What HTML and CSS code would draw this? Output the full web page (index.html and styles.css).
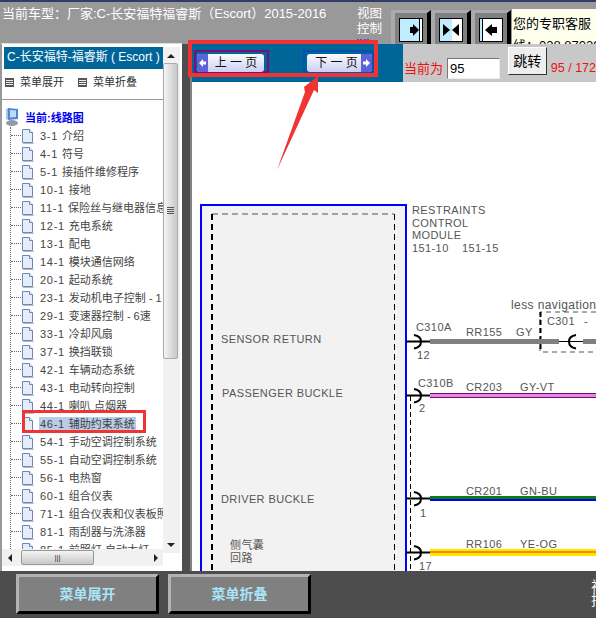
FILE: index.html
```html
<!DOCTYPE html>
<html lang="zh-CN">
<head>
  <meta charset="UTF-8" />
  <title>线路图</title>
  <link rel="stylesheet" href="styles.css">
</head>
<body>
<div class="page">

  <!-- TOP BAR -->
  <div class="top">
    <div class="model">当前车型：厂家:C-长安福特福睿斯（Escort）2015-2016</div>
    <div class="view-label">视图<br>控制<i class="view-dots"></i></div>
    <div class="view-btns">
      <div class="view-btn">
        <svg width="24" height="24" viewBox="0 0 24 24"><rect x=".5" y=".5" width="23" height="23" fill="#c0ecff" stroke="#000"/><rect x="20" y="1" width="3" height="22" fill="#fff"/><rect x="20" y="1" width="1" height="22"/><rect x="11" y="9" width="3" height="6"/><path d="M14 6l6 6-6 6z"/></svg>
      </div>
      <div class="view-btn">
        <svg width="24" height="24" viewBox="0 0 24 24"><rect x="1" y="1" width="12" height="22" fill="#c0ecff"/><rect x="13" y="1" width="10" height="22" fill="#fff"/><rect x=".5" y=".5" width="23" height="23" fill="none" stroke="#000"/><path d="M4 6l7 6-7 6zM20 6l-7 6 7 6z"/></svg>
      </div>
      <div class="view-btn">
        <svg width="24" height="24" viewBox="0 0 24 24"><rect x=".5" y=".5" width="23" height="23" fill="#fff" stroke="#000"/><rect x="1" y="1" width="3" height="22" fill="#c0ecff"/><rect x="3" y="1" width="1" height="22"/><path d="M6 12l7-6v3h5v6h-5v3z"/></svg>
      </div>
    </div>
    <div class="service">您的专职客服<br>线：028 87039</div>
  </div>

  <div class="main">

    <!-- LEFT MENU -->
    <div class="side">
      <div class="side-inner">
        <div class="side-left">
          <div class="side-title">C-长安福特-福睿斯 ( Escort ) -</div>
          <div class="side-tools">
            <span class="tool"><i class="tool-ico"></i>菜单展开</span>
            <span class="tool"><i class="tool-ico"></i>菜单折叠</span>
          </div>
          <div class="tree-wrap">
            <div class="tree-root">
              <svg width="14" height="20" viewBox="0 0 14 20"><path d="M3 1l10 1v10l-10 1z" fill="#4f86d0"/><path d="M5 3l6 .5v6.500l-6 .5z" fill="#bcdcff"/><path d="M1 2l2-1v12l-2-1z" fill="#a8c4e8"/><ellipse cx="7" cy="16" rx="6" ry="3" fill="#8f99a6"/></svg>
              <b>当前:线路图</b>
            </div>
            <ul class="tree" id="tree"></ul>
          </div>
          <div class="hscroll">
            <span class="arrow-l"></span>
            <span class="hthumb">|||</span>
            <span class="arrow-r"></span>
          </div>
        </div>
        <div class="vscroll">
          <span class="arrow-u"></span>
          <span class="vthumb"><i></i></span>
          <span class="arrow-d"></span>
        </div>
      </div>
    </div>

    <!-- DIAGRAM -->
    <div class="content">
      <div class="band">
        <div class="pager">
          <div class="page-frame prev">
            <div class="page-btn"><svg class="ico" width="11" height="18" viewBox="0 0 11 18"><path d="M2 9l4-4v2.500h3v3H6V13z" fill="#fff"/></svg>上 一 页</div>
          </div>
          <div class="page-frame next">
            <div class="page-btn">下 一 页<svg class="ico" width="11" height="18" viewBox="0 0 11 18"><path d="M9 9L5 5v2.500H2v3h3V13z" fill="#fff"/></svg></div>
          </div>
        </div>
        <div class="jump">
          <span class="now">当前为</span>
          <span class="num-input">95</span>
          <span class="go">跳转</span>
          <span class="count">95 / 172</span>
        </div>
      </div>
      <div class="sheet">
        <svg class="diagram" width="406" height="381" viewBox="0 0 406 381">
          <rect x="11" y="15" width="205" height="480" fill="#f2f2f2" stroke="#0000ff" stroke-width="2"/>
          <path d="M22 24h182" fill="none" stroke="#555" stroke-dasharray="6 4"/>
          <path d="M22 24v460" stroke="#000" stroke-width="2" stroke-dasharray="6 4"/>
          <path d="M204.500 24v460" stroke="#000" stroke-dasharray="6 4"/>
          <g class="lbl">
            <text x="222" y="24">RESTRAINTS</text>
            <text x="222" y="37">CONTROL</text>
            <text x="222" y="49">MODULE</text>
            <text x="222" y="62">151-10</text>
            <text x="272" y="62">151-15</text>
            <text class="lbl-big" x="321" y="119">less navigation</text>
            <text x="31" y="153">SENSOR RETURN</text>
            <text x="32" y="207">PASSENGER BUCKLE</text>
            <text x="31" y="313">DRIVER BUCKLE</text>
            <text x="40" y="359">侧气囊</text>
            <text x="40" y="372">回路</text>
            <text x="226" y="141">C310A</text>
            <text x="227" y="169">12</text>
            <text x="276" y="146">RR155</text>
            <text x="326" y="146">GY</text>
            <text x="357" y="135">C301</text>
            <text x="394" y="135">-</text>
            <text x="228" y="197">C310B</text>
            <text x="276" y="201">CR203</text>
            <text x="330" y="201">GY-VT</text>
            <text x="229" y="222">2</text>
            <text x="276" y="305">CR201</text>
            <text x="330" y="305">GN-BU</text>
            <text x="230" y="327">1</text>
            <text x="276" y="358">RR106</text>
            <text x="330" y="358">YE-OG</text>
            <text x="229" y="380">17</text>
          </g>
          <path d="M406 122h-56v40h56" fill="none" stroke="#555" stroke-dasharray="5 4"/>
          <path d="M350.500 122v40" stroke="#000" stroke-width="2" stroke-dasharray="5 3"/>
          <path d="M220.500 206v175" stroke="#000" stroke-dasharray="5 3"/>
          <g class="wires">
            <rect x="240" y="149" width="129" height="5" fill="#808080"/>
            <rect x="393" y="149" width="13" height="5" fill="#808080"/>
            <path d="M369 151.500h24"/>
            <rect x="240" y="203" width="166" height="5" fill="#800080"/>
            <rect x="240" y="204" width="166" height="3" fill="#d98fd9"/>
            <rect x="240" y="306" width="166" height="3" fill="#0a7d0a"/>
            <rect x="240" y="309" width="166" height="2" fill="#0000ff"/>
            <rect x="240" y="359" width="166" height="7" fill="#ffe600"/>
            <rect x="240" y="361" width="166" height="2" fill="#f09000"/>
          </g>
          <g class="pins">
            <path d="M216 151.500h24M224 145c6 1 7 4 7 6.500s-1 6-7 7"/>
            <path d="M216 205.500h24M224 199c6 1 7 4 7 6.500s-1 6-7 7"/>
            <path d="M216 308.500h24M224 302c6 1 7 4 7 6.500s-1 6-7 7"/>
            <path d="M216 362.500h24M224 356c6 1 7 4 7 6.500s-1 6-7 7"/>
            <path d="M386 145c-6 1-7 4-7 6.500s1 6 7 7"/>
          </g>
        </svg>
      </div>
    </div>
  </div>

  <!-- BOTTOM BAR -->
  <div class="bottom">
    <div class="big-btn">菜单展开</div>
    <div class="big-btn">菜单折叠</div>
    <div class="bottom-note">视<br>拮</div>
  </div>

  <!-- ANNOTATIONS -->
  <div class="mark mark-pager"></div>
  <div class="mark mark-item"></div>
  <svg class="mark-arrow" width="50" height="100" viewBox="0 0 50 100"><path d="M1 98L29 20l-1-5L42 4v17l-4-3z" fill="#f03434"/></svg>

</div>
<script>
  var items = ['3-1 介绍','4-1 符号','5-1 接插件维修程序','10-1 接地','11-1 保险丝与继电器信息','12-1 充电系统','13-1 配电','14-1 模块通信网络','20-1 起动系统','23-1 发动机电子控制 - 1','29-1 变速器控制 - 6速','33-1 冷却风扇','37-1 换挡联锁','42-1 车辆动态系统','43-1 电动转向控制','44-1 喇叭 点烟器','46-1 辅助约束系统','54-1 手动空调控制系统','55-1 自动空调控制系统','56-1 电热窗','60-1 组合仪表','71-1 组合仪表和仪表板照明','81-1 雨刮器与洗涤器','85-1 前照灯 自动大灯'];
  var doc = '<svg class="doc" width="13" height="15" viewBox="0 0 13 15"><path d="M1.500 .5h7l3 3v10h-10z" fill="#e4eefb" stroke="#6f86bb"/><path d="M8.500 .5v3h3" fill="#fff" stroke="#6f86bb"/><path d="M2 14.500h11" stroke="#bbb"/></svg>';
  var html = '';
  items.forEach(function (t) {
    var cut = t.indexOf(' ');
    var cls = t.indexOf('46-1') === 0 ? ' class="sel"' : '';
    html += '<li>' + doc + '<span' + cls + '><em>' + t.slice(0, cut) + '</em>' + t.slice(cut + 1) + '</span></li>';
  });
  document.getElementById('tree').innerHTML = html;
</script>
</body>
</html>
```

FILE: styles.css
```css
* { box-sizing: border-box; margin: 0; padding: 0; }
body {
  font-family: "Liberation Sans", "Noto Sans CJK SC", sans-serif;
  background: #4d4d4d;
  overflow: hidden;
}
.page {
  position: relative;
  width: 596px;
  height: 618px;
  display: flex;
  flex-direction: column;
  overflow: hidden;
}

/* TOP BAR */
.top {
  height: 44px;
  flex: none;
  display: flex;
  background: #999;
  border-top: 2px solid #333c66;
  color: #fff;
}
.model { width: 357px; font-size: 13px; line-height: 20px; padding: 2px 0 0 2px; white-space: nowrap; }
.view-label { width: 34px; font-size: 12.500px; line-height: 15px; padding-top: 5px; position: relative; }
.view-dots { position: absolute; left: 0; top: 37px; width: 12px; border-top: 2px dotted #7a33e0; }
.view-btns { display: flex; width: 121px; padding-top: 8px; }
.view-btn {
  width: 40px;
  height: 34px;
  background: #808080;
  border-style: solid;
  border-width: 3px 4px 0 4px;
  border-color: #aaa #000 #aaa #aaa;
  padding: 5px 0 0 4px;
  flex: none;
}
.view-btn svg { display: block; }
.service {
  flex: 1;
  margin-top: 7px;
  background: #ffffee;
  color: #000;
  font-size: 13px;
  line-height: 22px;
  padding: 4px 0 0 1px;
  white-space: nowrap;
  overflow: hidden;
}

/* LEFT MENU */
.main { flex: 1; display: flex; min-height: 0; }
.side { width: 190px; flex: none; padding-right: 8px; }
.side-inner {
  height: 528px;
  margin-top: -1px;
  background: #fff;
  border-top: 1px solid #ddd;
  border-left: 2px solid #999;
  display: flex;
  padding: 3px 2px 3px 0;
}
.side-left { width: 163px; display: flex; flex-direction: column; overflow: hidden; }
.side-title {
  height: 22px;
  margin-left: 2px;
  background: #006699;
  color: #fff;
  font-size: 12px;
  line-height: 21px;
  padding-left: 3px;
  white-space: nowrap;
  overflow: hidden;
}
.side-tools {
  height: 31px;
  flex: none;
  display: flex;
  gap: 14px;
  padding: 3px 0 0 3px;
  border-bottom: 1px solid #999;
  font-size: 11px;
  line-height: 16px;
  color: #333;
  white-space: nowrap;
}
.tool { display: flex; align-items: center; gap: 6px; height: 16px; margin-top: 2px; }
.tool-ico { width: 9px; height: 9px; border: 1px solid #555; background: repeating-linear-gradient(#555 0 1px, #eee 1px 2px); }
.tree-wrap { flex: 1; min-height: 0; overflow: hidden; padding-top: 7px; }
.tree-root { display: flex; align-items: center; gap: 6px; height: 20px; padding-left: 3px; font-size: 11px; color: #0000ee; }
.tree { list-style: none; margin-left: 8px; border-left: 1px dotted #666; }
.tree li { height: 18px; display: flex; align-items: center; font-size: 11px; color: #444; white-space: nowrap; position: relative; padding-left: 10px; }
.tree li::before { content: ""; position: absolute; left: 0; top: 8px; width: 10px; border-top: 1px dotted #666; }
.tree li .doc { flex: none; margin-right: 5px; }
.tree li span { padding: 0 1px; line-height: 15px; }
.tree li em { font-style: normal; letter-spacing: .7px; margin-right: 4px; }
.tree li .sel { background: #b9cde6; }
.hscroll { height: 17px; flex: none; display: flex; align-items: center; background: #f1f1f1; position: relative; margin-bottom: 2px; }
.hthumb {
  position: absolute;
  left: 19px;
  top: 1px;
  width: 73px;
  height: 15px;
  background: linear-gradient(#f4f4f4, #c8c8c8);
  border: 1px solid #999;
  border-radius: 2px;
  font-size: 8px;
  text-align: center;
  line-height: 13px;
  color: #333;
}
.arrow-l { margin-left: 6px; border: 4px solid transparent; border-right-color: #222; border-left: 0; }
.arrow-r { margin-left: auto; margin-right: 5px; border: 4px solid transparent; border-left-color: #222; border-right: 0; }
.vscroll {
  width: 17px;
  flex: none;
  background: #f1f1f1;
  display: flex;
  flex-direction: column;
  align-items: center;
  height: 506px;
  padding-right: 2px;
}
.arrow-u { margin: 7px 0 5px; border: 4px solid transparent; border-bottom-color: #222; border-top: 0; }
.arrow-d { margin: auto 0 6px; border: 4px solid transparent; border-top-color: #222; border-bottom: 0; }
.vthumb {
  width: 15px;
  height: 296px;
  background: linear-gradient(90deg, #f4f4f4, #c8c8c8);
  border: 1px solid #aaa;
  border-radius: 2px;
  display: flex;
  align-items: center;
  justify-content: center;
}
.vthumb i { width: 7px; height: 8px; background: repeating-linear-gradient(#555 0 1px, transparent 1px 2px); }

/* DIAGRAM */
.content { flex: 1; min-width: 0; display: flex; flex-direction: column; background: #fff; height: 527px; border-left: 2px solid #808080; }
.band { height: 38px; flex: none; display: flex; background: #006699; }
.pager { width: 211px; display: flex; align-items: flex-start; padding: 6px 0 0 2px; gap: 34px; }
.page-frame { border: 2px solid; height: 23px; }
.page-frame.prev { width: 75px; border-color: #7a0f7a; padding: 2px 3px 0 1px; }
.page-frame.next { width: 71px; border-color: #0a50b0; padding: 2px 0 0 2px; }
.page-btn {
  height: 18px;
  background: linear-gradient(#fafaff, #ccd0f2);
  border-radius: 3px;
  font-size: 12px;
  line-height: 18px;
  color: #111;
  display: flex;
  align-items: center;
  justify-content: center;
  white-space: nowrap;
  position: relative;
  overflow: hidden;
}
.prev .page-btn { padding-left: 11px; }
.next .page-btn { padding-right: 6px; }
.page-btn .ico { position: absolute; top: 0; background: #5b63d6; }
.prev .ico { left: 0; }
.next .ico { right: 0; }
.jump { flex: 1; background: #c8c8c8; display: flex; align-items: flex-end; color: #ee1111; padding: 0 0 3px 1px; white-space: nowrap; overflow: hidden; }
.now { width: 43px; font-size: 13px; line-height: 20px; margin-bottom: 0; }
.num-input {
  width: 53px;
  height: 21px;
  background: #fff;
  border: 1px solid #eee;
  border-top-color: #777;
  border-left-color: #777;
  color: #000;
  font-size: 13px;
  line-height: 20px;
  padding-left: 2px;
}
.go {
  width: 39px;
  height: 28px;
  margin: 0 4px 4px 8px;
  background: #eee;
  border: 1px solid #333;
  border-top-color: #fff;
  border-left-color: #fff;
  color: #000;
  font-size: 14px;
  line-height: 26px;
  text-align: center;
}
.count { font-size: 12.500px; line-height: 20px; margin-bottom: 1px; }
.sheet { flex: 1; min-height: 0; overflow: hidden; padding-top: 108px; margin-left: -2px; }
.diagram { display: block; }
.lbl text { font: 11px "Liberation Sans", "Noto Sans CJK SC", sans-serif; letter-spacing: .4px; fill: #555; }
.lbl .lbl-big { font-size: 12px; }
.wires path { stroke: #000; stroke-width: 1; }
.pins path { fill: none; stroke: #000; stroke-width: 2; }

/* BOTTOM BAR */
.bottom { height: 47px; flex: none; display: flex; gap: 9px; padding: 3px 0 0 16px; background: #4d4d4d; position: relative; }
.big-btn {
  width: 143px;
  height: 40px;
  background: #808080;
  border: 3px solid;
  border-color: #b3b3b3 #000 #000 #b3b3b3;
  color: #a9e4f7;
  font-size: 14px;
  font-weight: 700;
  line-height: 34px;
  text-align: center;
}
.bottom-note { position: absolute; left: 591px; top: 8px; width: 14px; color: #fff; font-size: 14px; line-height: 14px; }

/* ANNOTATIONS */
.mark { position: absolute; pointer-events: none; }
.mark-pager { left: 188px; top: 40px; width: 190px; height: 37px; border: 4px solid #f03434; }
.mark-item { left: 22px; top: 410px; width: 124px; height: 23px; border: 3px solid #f03434; }
.mark-arrow { position: absolute; left: 276px; top: 72px; }
```
